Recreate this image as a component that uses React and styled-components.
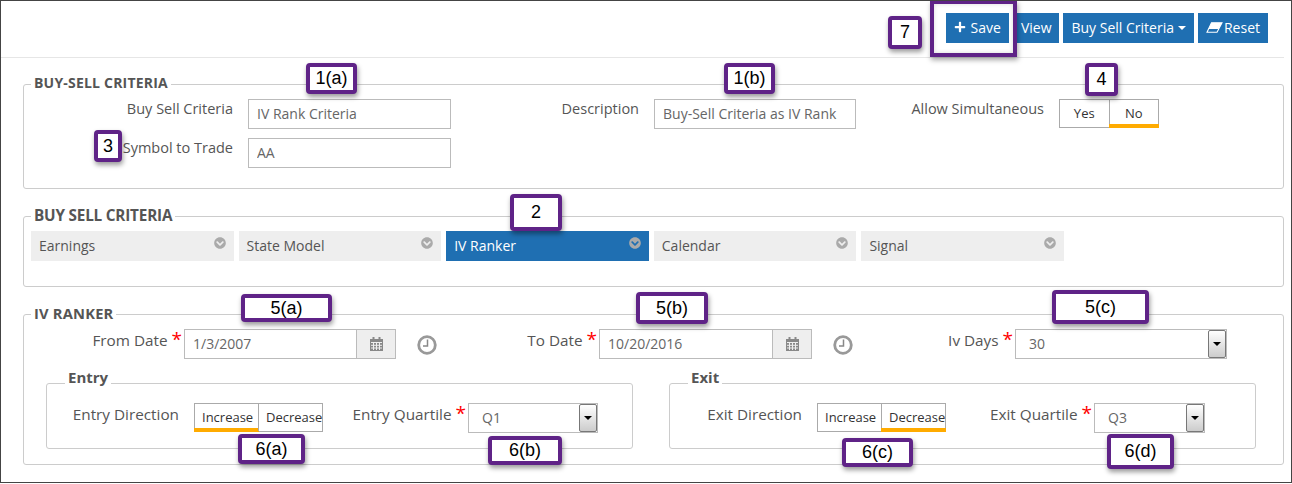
import React from "react";
import styled, { createGlobalStyle } from "styled-components";
import { FaPlus, FaChevronCircleDown } from "react-icons/fa";

const GlobalStyle = createGlobalStyle`
  html, body {
    margin: 0;
    padding: 0;
    background: #fff;
  }
  body {
    font-family: "Open Sans", "Liberation Sans", sans-serif;
    font-size: 14px;
    color: #555;
  }
  * {
    box-sizing: border-box;
  }
`;

function Eraser() {
  return (
    <svg width="17" height="11" viewBox="0 0 17 11">
      <path d="M5.5 0.7 H16 L11 10.3 H1 Z" fill="none" stroke="#fff" strokeWidth="1.1" />
      <path d="M5.5 0.7 H16 L12.6 7 H2.5 Z" fill="#fff" />
    </svg>
  );
}

function Calendar() {
  return (
    <svg width="13" height="14" viewBox="0 0 13 14">
      <path d="M0 2 H13 V14 H0 Z" fill="#888" />
      <rect x="2.5" y="0" width="2" height="3.5" fill="#888" />
      <rect x="8.5" y="0" width="2" height="3.5" fill="#888" />
      <path
        d="M1 5.5 H12 M1 8.3 H12 M1 11 H12 M3.5 5 V13 M6.5 5 V13 M9.5 5 V13"
        stroke="#eee"
        strokeWidth="1"
        fill="none"
      />
    </svg>
  );
}

function Clock() {
  return (
    <svg width="20" height="20" viewBox="0 0 20 20">
      <circle cx="10" cy="10" r="8.3" fill="none" stroke="#999" strokeWidth="2.8" />
      <path d="M10.5 4.5 V11 H6" fill="none" stroke="#888" strokeWidth="1.5" />
    </svg>
  );
}

function Toggle({ options, active, $pad }) {
  return (
    <ToggleGroup>
      {options.map((o) => (
        <ToggleItem key={o} $on={o === active} $pad={$pad}>
          {o}
        </ToggleItem>
      ))}
    </ToggleGroup>
  );
}

function SelectBox({ value }) {
  return (
    <Select>
      <SelectText>{value}</SelectText>
      <SelectArrow />
    </Select>
  );
}

function DateInput({ value }) {
  return (
    <InputGroup>
      <Input readOnly value={value} />
      <Addon>
        <Calendar />
      </Addon>
    </InputGroup>
  );
}

function Required({ children }) {
  return (
    <FormLabel $pad={2}>
      {children}
      <Star>*</Star>
    </FormLabel>
  );
}

const notes = [
  { t: "1(a)", x: 306, y: 63, w: 51, h: 31 },
  { t: "1(b)", x: 724, y: 63, w: 51, h: 31 },
  { t: "2", x: 510, y: 194, w: 52, h: 37 },
  { t: "3", x: 94, y: 130, w: 28, h: 32 },
  { t: "4", x: 1085, y: 63, w: 33, h: 33 },
  { t: "5(a)", x: 241, y: 294, w: 91, h: 28 },
  { t: "5(b)", x: 636, y: 292, w: 72, h: 32 },
  { t: "5(c)", x: 1052, y: 290, w: 97, h: 34 },
  { t: "6(a)", x: 238, y: 434, w: 67, h: 30 },
  { t: "6(b)", x: 488, y: 436, w: 74, h: 29 },
  { t: "6(c)", x: 842, y: 438, w: 71, h: 29 },
  { t: "6(d)", x: 1107, y: 434, w: 67, h: 35 },
  { t: "7", x: 888, y: 16, w: 34, h: 33 },
];

const tabs = ["Earnings", "State Model", "IV Ranker", "Calendar", "Signal"];

export default function App() {
  return (
    <Frame>
      <GlobalStyle />
      <Toolbar>
        <Button $gap={5}>
          <FaPlus size={12} /> Save
        </Button>
        <Button>View</Button>
        <Button>
          Buy Sell Criteria <Caret />
        </Button>
        <Button $gap={1}>
          <Eraser /> Reset
        </Button>
      </Toolbar>

      <Main>
        <Section $bottom={18}>
          <Legend $size={14}>BUY-SELL CRITERIA</Legend>
          <CriteriaGrid>
            <Label>Buy Sell Criteria</Label>
            <Input readOnly value="IV Rank Criteria" />
            <Label>Description</Label>
            <Input readOnly value="Buy-Sell Criteria as IV Rank" />
            <Label>Allow Simultaneous</Label>
            <Toggle options={["Yes", "No"]} active="No" />
            <Label>Symbol to Trade</Label>
            <Input readOnly value="AA" />
          </CriteriaGrid>
        </Section>

        <Section $bottom={18}>
          <Legend $size={15.3} $spacing={-0.2}>
            BUY SELL CRITERIA
          </Legend>
          <TabRow>
            {tabs.map((t) => (
              <Tab key={t} $active={t === "IV Ranker"}>
                {t}
                <TabIcon>
                  <FaChevronCircleDown size={12} />
                </TabIcon>
              </Tab>
            ))}
          </TabRow>
        </Section>

        <Section $bottom={0}>
          <Legend $size={14.7}>IV RANKER</Legend>
          <DateGrid>
            <Required>From Date </Required>
            <DateInput value="1/3/2007" />
            <ClockCell>
              <Clock />
            </ClockCell>
            <Required>To Date </Required>
            <DateInput value="10/20/2016" />
            <ClockCell>
              <Clock />
            </ClockCell>
            <Required>Iv Days </Required>
            <SelectBox value="30" />
          </DateGrid>
          <SubRow>
            <SubSection>
              <SubLegend>Entry</SubLegend>
              <SubGrid $gap={145} $select={130}>
                <FormLabel>Entry Direction</FormLabel>
                <Toggle options={["Increase", "Decrease"]} active="Increase" $pad={7} />
                <Required>Entry Quartile </Required>
                <SelectBox value="Q1" />
              </SubGrid>
            </SubSection>
            <SubSection>
              <SubLegend>Exit</SubLegend>
              <SubGrid $gap={148} $select={111}>
                <FormLabel>Exit Direction</FormLabel>
                <Toggle options={["Increase", "Decrease"]} active="Decrease" $pad={7} />
                <Required>Exit Quartile </Required>
                <SelectBox value="Q3" />
              </SubGrid>
            </SubSection>
          </SubRow>
        </Section>
      </Main>

      {notes.map((n) => (
        <Note key={n.t} $x={n.x} $y={n.y} $w={n.w} $h={n.h}>
          {n.t}
        </Note>
      ))}
      <SaveHighlight />
    </Frame>
  );
}

const Frame = styled.div`
  position: relative;
  width: 1292px;
  height: 483px;
  border: 1px solid #444;
  overflow: hidden;
`;

const Toolbar = styled.div`
  display: flex;
  justify-content: flex-end;
  gap: 4px;
  height: 57px;
  width: 1283px;
  padding: 12px 16px 0 0;
  border-bottom: 1px solid #e6e6e6;
`;

const Button = styled.button`
  display: inline-flex;
  align-items: center;
  gap: ${(p) => p.$gap ?? 4}px;
  height: 30px;
  padding: 0 8px 2px;
  border: 0;
  background: #1f6fb2;
  color: #fff;
  font-family: inherit;
  font-size: 14px;
`;

const Caret = styled.span`
  width: 0;
  height: 0;
  margin-top: 2px;
  border-left: 4px solid transparent;
  border-right: 4px solid transparent;
  border-top: 4px solid #fff;
`;

const Main = styled.div`
  padding: 17px 7px 0 22px;
`;

const Section = styled.fieldset`
  margin: 0 0 ${(p) => p.$bottom}px;
  padding: 6px 0 0;
  border: 1px solid #ccc;
  border-radius: 3px;
  min-width: 0;
`;

const Legend = styled.legend`
  margin-left: 7px;
  padding: 0 3px;
  font-size: ${(p) => p.$size}px;
  line-height: 18px;
  font-weight: 700;
  color: #555;
  letter-spacing: ${(p) => p.$spacing ?? 0.2}px;
  transform: translateY(-1px);
`;

const CriteriaGrid = styled.div`
  display: grid;
  grid-template-columns: 224px 203px 203px 202px 203px 100px;
  grid-auto-rows: 30px;
  row-gap: 9px;
  padding-bottom: 20px;
`;

const Label = styled.label`
  text-align: right;
  font-size: 14.5px;
  line-height: 20px;
  padding-right: ${(p) => p.$pad ?? 15}px;
  white-space: nowrap;
  color: #555;
`;

const FormLabel = styled(Label)`
  font-size: 15.3px;
  line-height: 22px;
`;

const Star = styled.span`
  color: #f00;
  font-size: 19px;
  line-height: 20px;
  vertical-align: 0;
`;

const Input = styled.input`
  width: 100%;
  min-width: 0;
  height: 30px;
  padding: 0 8px 2px;
  border: 1px solid #bbb;
  outline: 0;
  background: #fff;
  color: #666;
  font-family: inherit;
  font-size: 14px;
`;

const ToggleGroup = styled.div`
  display: flex;
  height: 29px;
  border: 1px solid #aaa;
`;

const ToggleItem = styled.div`
  position: relative;
  flex: 1 1 0;
  min-width: 0;
  text-align: ${(p) => (p.$pad ? "left" : "center")};
  padding-left: ${(p) => p.$pad ?? 0}px;
  font-size: 13px;
  line-height: 27px;
  color: #333;
  white-space: nowrap;
  & + & {
    border-left: 1px solid #aaa;
  }
  &::after {
    content: "";
    display: ${(p) => (p.$on ? "block" : "none")};
    position: absolute;
    left: -1px;
    right: -1px;
    bottom: -1px;
    height: 4px;
    background: #ffab00;
  }
`;

const TabRow = styled.div`
  display: flex;
  gap: 5px;
  padding: 0 0 25px 7px;
  height: 55px;
`;

const Tab = styled.div`
  position: relative;
  width: 202.6px;
  height: 30px;
  padding-left: 8px;
  line-height: 30px;
  font-size: 14px;
  background: ${(p) => (p.$active ? "#1f6fb2" : "#eee")};
  color: ${(p) => (p.$active ? "#fff" : "#555")};
`;

const TabIcon = styled.span`
  position: absolute;
  top: 6px;
  right: 8px;
  display: flex;
  color: #aaa;
`;

const DateGrid = styled.div`
  display: grid;
  grid-template-columns: 160px 212px 62px 141px 213px 62px 141px 212px;
  height: 30px;
`;

const InputGroup = styled.div`
  display: flex;
`;

const Addon = styled.div`
  display: flex;
  flex: 0 0 40px;
  align-items: center;
  justify-content: center;
  height: 30px;
  margin-left: -1px;
  border: 1px solid #bbb;
  background: #eee;
`;

const ClockCell = styled.div`
  display: flex;
  justify-content: center;
  padding-top: 6px;
`;

const Select = styled.div`
  display: flex;
  align-items: center;
  justify-content: space-between;
  height: 30px;
  padding-left: 13px;
  border: 1px solid #bbb;
  color: #666;
`;

const SelectText = styled.span`
  padding-bottom: 2px;
`;

const SelectArrow = styled.span`
  position: relative;
  width: 18px;
  height: 28px;
  border: 1px solid #777;
  border-radius: 2px;
  background: linear-gradient(#fff, #ccc);
  &::after {
    content: "";
    position: absolute;
    top: 11px;
    left: 4px;
    border-left: 4px solid transparent;
    border-right: 4px solid transparent;
    border-top: 4px solid #000;
  }
`;

const SubRow = styled.div`
  display: flex;
  gap: 36px;
  padding: 15px 22px 15px;
`;

const SubSection = styled.fieldset`
  flex: 0 0 587px;
  margin: 0;
  padding: 11px 0 0;
  height: 75px;
  border: 1px solid #ccc;
  border-radius: 3px;
  min-width: 0;
`;

const SubLegend = styled.legend`
  margin-left: 18px;
  padding: 0 3px;
  font-size: 15px;
  line-height: 18px;
  font-weight: 700;
  color: #555;
  transform: translateY(-6px);
`;

const SubGrid = styled.div`
  display: grid;
  grid-template-columns: 147px 129px ${(p) => p.$gap}px ${(p) => p.$select}px;
`;

const Note = styled.div`
  position: absolute;
  left: ${(p) => p.$x - 1}px;
  top: ${(p) => p.$y - 1}px;
  width: ${(p) => p.$w}px;
  height: ${(p) => p.$h}px;
  display: flex;
  align-items: center;
  justify-content: center;
  border: 4px solid #5f2387;
  border-radius: 4px;
  background: #fff;
  box-shadow: 1px 3px 5px rgba(0, 0, 0, 0.4);
  color: #000;
  font-family: "Liberation Sans", Arial, sans-serif;
  font-size: 18px;
`;

const SaveHighlight = styled.div`
  position: absolute;
  left: 929px;
  top: -1px;
  width: 87px;
  height: 57px;
  border: 4px solid #5f2387;
  box-shadow: 1px 3px 5px rgba(0, 0, 0, 0.35), inset 0 0 4px rgba(0, 0, 0, 0.15);
`;
